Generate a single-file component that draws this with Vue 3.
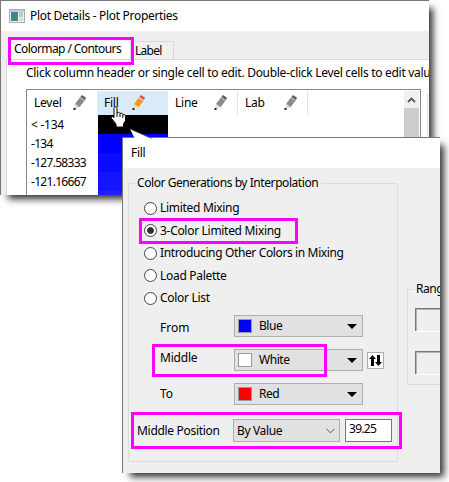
<script setup>
const columns = [
  { name: 'Level', cls: 'level' },
  { name: 'Fill', cls: 'fill', active: true },
  { name: 'Line', cls: 'line' },
  { name: 'Lab', cls: 'lab' }
]
const rows = [
  { level: '< -134', color: '#000000' },
  { level: '-134', color: '#0000ff' },
  { level: '-127.58333', color: '#0b0bff' },
  { level: '-121.16667', color: '#1414ff' },
  { level: '', color: '#1f1fff' }
]
const modes = [
  { label: 'Limited Mixing', cls: 'm1' },
  { label: '3-Color Limited Mixing', cls: 'm2', checked: true },
  { label: 'Introducing Other Colors in Mixing', cls: 'm3' },
  { label: 'Load Palette', cls: 'm4' },
  { label: 'Color List', cls: 'm5' }
]
const colors = [
  { label: 'From', name: 'Blue', color: '#0000ff', cls: 'from' },
  { label: 'Middle', name: 'White', color: '#ffffff', cls: 'middle', swap: true },
  { label: 'To', name: 'Red', color: '#ff0000', cls: 'to' }
]
</script>

<template>
  <main class="desktop">
    <section class="window details">
      <div class="frame">
        <header class="titlebar">
          <svg class="app-icon" width="16" height="14" viewBox="0 0 16 14">
            <rect x=".5" y=".5" width="15" height="13" fill="#eef1f2" stroke="#a9adb0" />
            <rect x="1" y="1" width="14" height="2" fill="#c7cdd1" />
            <rect x="2" y="3" width="7" height="9" fill="#3f8a78" />
            <rect x="2" y="3" width="4" height="5" fill="#477f9c" />
            <rect x="10" y="3" width="4" height="5" fill="#b9c8d2" />
            <rect x="10" y="9" width="4" height="3" fill="#d3dadd" />
          </svg>
          <span class="title">Plot Details - Plot Properties</span>
        </header>
        <nav class="tabs">
          <div class="tab current"><span>Colormap / Contours</span></div>
          <div class="tab"><span>Label</span></div>
        </nav>
        <div class="pane">
          <p class="hint"><span>Click column header or single cell to edit. Double-click Level cells to edit valu</span></p>
          <div class="pane-body">
            <div class="table">
              <div class="grid">
                <div class="head">
                  <div v-for="c in columns" :key="c.name" class="th" :class="[c.cls, { active: c.active }]">
                    <span>{{ c.name }}</span>
                    <svg class="pencil" width="13" height="16" viewBox="0 0 13 16">
                      <path d="M2 9 7.500 1.800 12 5 6.500 12.200Z" :fill="c.active ? '#f39a1d' : '#8b8b8b'" />
                      <path d="M7.500 1.800 9 0 13 2.800 12 5Z" :fill="c.active ? '#e04848' : '#5c5c5c'" />
                      <path d="M7 2.500 11.300 5.800" :stroke="c.active ? '#fff0d0' : '#c5c5c5'" stroke-width="1" />
                      <path d="M2 9 6.500 12.200 1 15Z" :fill="c.active ? '#f4dcc0' : '#dddddd'" />
                      <path d="M.5 13H2.500V15H.5Z" fill="#222" />
                    </svg>
                  </div>
                </div>
                <div v-for="(r, i) in rows" :key="i" class="row">
                  <span class="level">{{ r.level }}</span>
                  <i class="cell" :style="{ background: r.color }"></i>
                </div>
              </div>
              <div class="scroll">
                <div class="up">
                  <svg width="9" height="6" viewBox="0 0 9 6"><path d="M1 5 4.500 1.500 8 5" fill="none" stroke="#555" stroke-width="1.800" /></svg>
                </div>
                <div class="thumb"></div>
              </div>
            </div>
            <div class="edge"></div>
          </div>
        </div>
      </div>
    </section>

    <section class="window dialog">
      <div class="frame">
        <header class="titlebar"><span class="title">Fill</span></header>
        <div class="body">
          <fieldset class="group">
            <legend><span>Color Generations by Interpolation</span></legend>
            <div class="modes">
              <label v-for="m in modes" :key="m.cls" class="mode" :class="m.cls">
                <i class="radio" :class="{ checked: m.checked }"></i><span>{{ m.label }}</span>
              </label>
            </div>
            <div class="colors">
              <div v-for="c in colors" :key="c.cls" class="color-row" :class="c.cls">
                <span class="name">{{ c.label }}</span>
                <div class="drop">
                  <i class="swatch" :style="{ background: c.color }"></i>
                  <span>{{ c.name }}</span>
                  <svg class="arrow" width="10" height="5" viewBox="0 0 10 5"><path d="M0 0H10L5 5Z" /></svg>
                </div>
                <div v-if="c.swap" class="swap">
                  <svg width="13" height="11" viewBox="0 0 13 11">
                    <path d="M3.500 0 7 4H5V11H2V4H0Z" />
                    <path d="M8 0H11V7H13L9.500 11 6 7H8Z" />
                  </svg>
                </div>
              </div>
            </div>
            <div class="position">
              <span class="name">Middle Position</span>
              <div class="select"><span>By Value</span>
                <svg width="9" height="6" viewBox="0 0 9 6"><path d="M.7 1 4.500 4.800 8.300 1" fill="none" stroke="#555" /></svg>
              </div>
              <div class="input"><span>39.25</span></div>
            </div>
          </fieldset>
          <fieldset class="group range">
            <legend><span>Rang</span></legend>
            <div class="field"></div>
            <div class="field"></div>
          </fieldset>
        </div>
      </div>
    </section>

    <svg class="callout" width="24" height="10" viewBox="0 0 24 10"><path d="M1 0 23 10H6Z" fill="#fff" /><path d="M1 0 23 9.500" stroke="#555" stroke-width=".7" /></svg>
    <svg class="cursor" width="18" height="22" viewBox="0 0 18 22">
      <path d="M5.500 1C6.600 1 7 1.600 7 2.500V7C8 6 9.600 6.300 10 7.500 11.200 6.800 12.500 7.300 12.800 8.500 14.200 8 15.500 9 15.500 10.500V14.500L13.500 18V21H6V18L1.500 12.500C.7 11 2.400 10 3.700 11.200L4 11.500V2.500C4 1.600 4.500 1 5.500 1Z" fill="#fff" stroke="#000" />
      <path d="M7 7V11M10 8V11M12.800 9V12" stroke="#000" fill="none" />
    </svg>
    <i class="mark mark-tab"></i>
    <i class="mark mark-mode"></i>
    <i class="mark mark-middle"></i>
    <i class="mark mark-position"></i>
  </main>
</template>

<style>
body { margin: 0; background: #fff; overflow: hidden; }
</style>

<style scoped>
* { box-sizing: border-box; }
.desktop { position: relative; width: 449px; height: 482px; overflow: hidden; background: #fff; color: #000; font: 12px/16px "Noto Sans", "Open Sans", sans-serif; white-space: nowrap; }
.window { position: absolute; }
.window::before { content: ''; position: absolute; left: 6px; top: 6px; right: 0; bottom: 0; box-shadow: 3px 3px 7px 1px #333; }
.frame { position: relative; width: 100%; height: 100%; overflow: hidden; background: #efefef; border: solid #777; border-width: 1px 0 0 1px; }
.details { left: 0; top: 0; width: 429px; height: 195px; }
.dialog { left: 122px; top: 137px; width: 318px; height: 336px; }
.titlebar { display: flex; align-items: center; height: 30px; padding-left: 8px; background: #fff; }
.title { letter-spacing: -.31px; }
.app-icon { margin-right: 5px; }
.tabs { display: flex; align-items: flex-end; height: 28px; padding-left: 7px; }
.tab { width: 44px; height: 18px; border: 1px solid #d9d9d9; border-bottom: 0; padding: 1px 0 0 4px; background: #f0f0f0; letter-spacing: -.7px; }
.tab.current { width: 122px; height: 21px; margin-right: 0; padding: 3px 0 0 6px; background: #fff; border: 0; letter-spacing: -.58px; }
.pane { height: 140px; margin-left: 5px; border: solid #d9d9d9; border-width: 1px 0 0 1px; background: #fff; }
.hint { height: 29px; margin: 0; padding: 5px 0 0 19px; letter-spacing: -.29px; }
.pane-body { display: flex; padding-left: 19px; }
.table { display: flex; width: 396px; height: 110px; padding: 1px 1px 0 0; border: solid #828790; border-width: 1px 1px 0 1px; }
.grid { width: 377px; flex: none; }
.head { display: flex; height: 24px; letter-spacing: -.25px; }
.th { display: flex; align-items: center; justify-content: space-between; width: 70px; padding: 0 10px 0 7px; border-right: 1px solid #e2e2e2; }
.th.level { padding-right: 11px; border: 0; }
.th.fill { width: 71px; padding-right: 23px; background: #d9ebf9; border: 0; }
.row { display: flex; height: 19px; align-items: center; }
.row .level { width: 71px; padding-left: 4px; letter-spacing: -.7px; }
.row:nth-child(2) .level { letter-spacing: -.25px; }
.cell { width: 70px; height: 19px; }
.scroll { width: 15px; }
.up { display: flex; align-items: center; justify-content: center; height: 17px; background: #f0f0f0; }
.thumb { height: 100px; background: #cdcdcd; }
.edge { width: 2px; margin: 5px 0 0 6px; height: 100px; border-left: 1px solid #ddd; }
.body { display: flex; }
.group { min-width: 0; margin: 0; padding: 0; border: 1px solid #dcdcdc; }
.dialog .body > .group:first-child { flex: none; width: 270px; height: 287px; margin: 7px 0 0 5px; }
.group legend { height: 16px; margin-left: 6px; padding: 0 3px 0 2px; letter-spacing: -.43px; }
.modes { display: flex; flex-direction: column; height: 119px; padding: 6px 0 0 15px; }
.mode { display: flex; flex: none; align-items: center; height: 22px; letter-spacing: -.3px; }
.mode.m2, .mode.m4 { height: 23px; }
.mode.m3 { letter-spacing: -.37px; }
.radio { width: 13px; height: 13px; margin-right: 3px; border: 1px solid #444; border-radius: 50%; background: #fff; }
.radio.checked { background: radial-gradient(circle, #333 0 3px, #fff 3.800px); }
.colors { display: flex; flex-direction: column; gap: 12px; padding: 5px 0 0 31px; }
.color-row { display: flex; align-items: center; height: 22px; }
.name { width: 74px; }
.from .name { padding-top: 3px; }
.middle .name { padding-bottom: 4px; letter-spacing: -.2px; }
.drop { display: flex; align-items: center; width: 129px; height: 22px; padding: 0 5px 0 3px; background: #e1e1e1; border: 1px solid #adadad; letter-spacing: -.45px; }
.swatch { width: 14px; height: 14px; border: 1px solid #999; margin-right: 7px; }
.arrow { margin-left: auto; }
.swap { display: flex; align-items: center; justify-content: center; width: 17px; height: 17px; margin-left: 4px; border: 1px solid #adadad; background: #fff; }
.position { display: flex; height: 23px; align-items: center; margin-top: 14px; padding-left: 8px; }
.position .name { width: 96px; letter-spacing: -.3px; }
.select { display: flex; align-items: center; justify-content: space-between; width: 107px; height: 23px; padding: 0 4px 0 3px; border: 1px solid #adadad; background: #e1e1e1; letter-spacing: -.35px; }
.input { width: 47px; height: 23px; margin-left: 5px; padding: 1px 0 0 3px; border: 1px solid #777; background: #fff; letter-spacing: -.7px; }
.group.range { flex: none; width: 60px; height: 104px; margin: 113px 0 0 9px; }
.range .field { width: 60px; height: 23px; margin: 11px 0 20px 7px; border: solid #777; border-width: 1px 0 0 1px; box-shadow: inset 1px 1px #b5b5b5, 0 1px #fff; }
.range .field + .field { margin-top: 20px; }
.mark { position: absolute; border: 3px solid #f0f; }
.mark-tab { left: 8px; top: 37px; width: 126px; height: 28px; }
.mark-mode { left: 139px; top: 218px; width: 159px; height: 26px; }
.mark-middle { left: 152px; top: 344px; width: 175px; height: 33px; }
.mark-position { left: 131px; top: 412px; width: 271px; height: 37px; }
.callout { position: absolute; left: 129px; top: 129px; }
.cursor { position: absolute; left: 110px; top: 106px; }
</style>
